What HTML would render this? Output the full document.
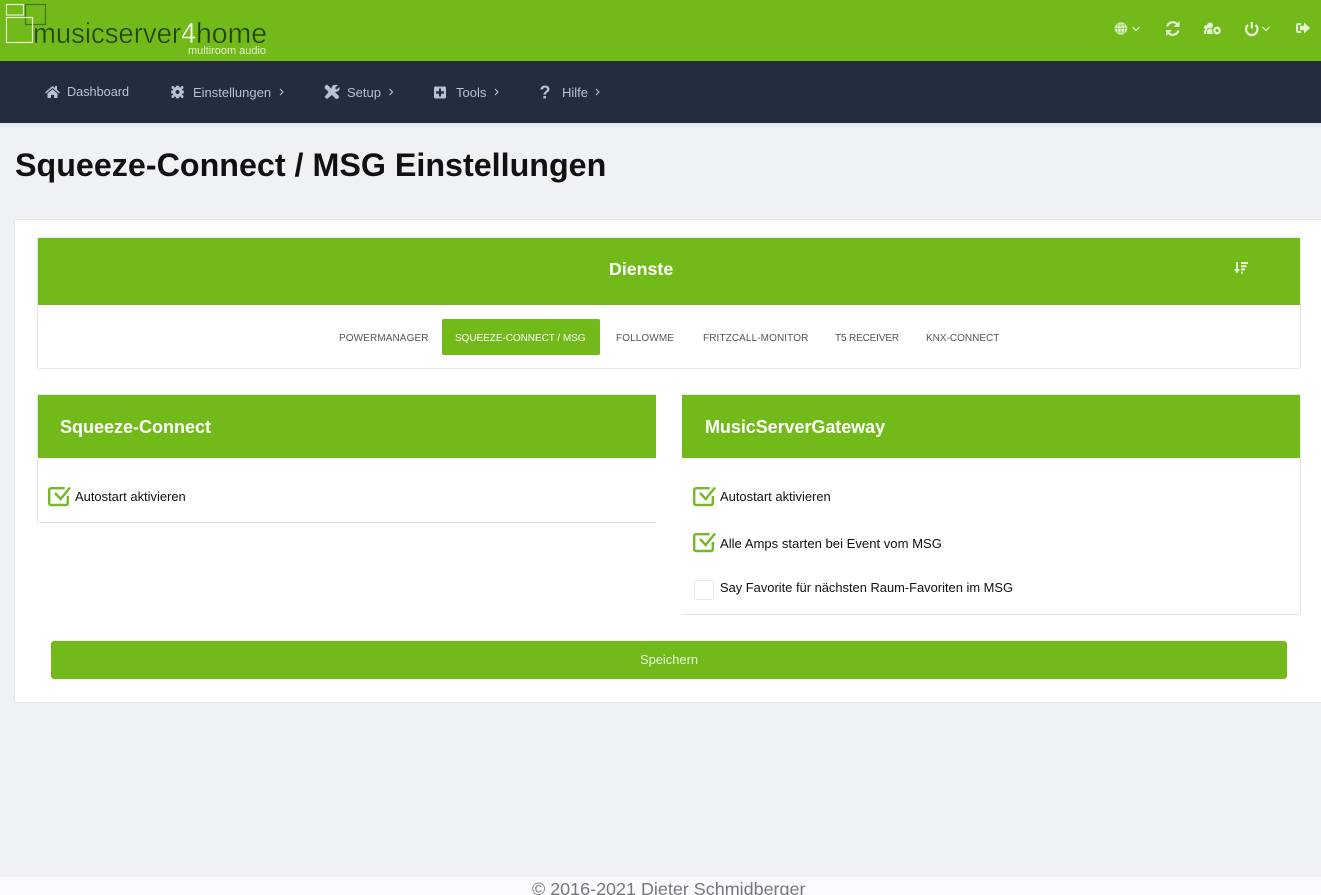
<!DOCTYPE html>
<html><head><meta charset="utf-8"><title>Squeeze-Connect / MSG Einstellungen</title>
<style>
*{box-sizing:border-box}
html,body{margin:0;padding:0;width:1321px;height:895px;overflow:hidden;background:#eef2f5;font-family:"Liberation Sans",Arial,sans-serif}
.a{position:absolute}
.t{position:absolute;white-space:nowrap;line-height:1}
svg{position:absolute;overflow:visible}
.nav{color:#b6c2d4;font-size:13px;top:85.5px}
.tab{color:#555;font-size:10px;top:333.5px}
.lab{color:#111;font-size:12.95px}
.cb{position:absolute;width:20px;height:20px;border:1px solid #e6e8ea;border-radius:2px;background:#fff}
#wrap{position:absolute;left:0;top:0;width:1321px;height:895px;overflow:hidden}
</style></head><body><div id="wrap">
<!-- top bar -->
<div class="a" style="left:0;top:0;width:1321px;height:61px;background:#72ba1a"></div>
<!-- logo -->
<svg style="left:0;top:0" width="300" height="61">
<rect x="6.500" y="4.500" width="17" height="10.500" fill="none" stroke="#e3f0cf" stroke-width="1.200"/>
<rect x="25.500" y="4.500" width="20" height="20" fill="none" stroke="#48701c" stroke-width="1.200"/>
<rect x="6.500" y="17.500" width="26" height="25" fill="none" stroke="#e3f0cf" stroke-width="1.200"/>
<g font-family="Liberation Sans" stroke="#72ba1a" stroke-width=".45">
<text x="33" y="43" font-size="29" fill="#24420f" textLength="148" lengthAdjust="spacingAndGlyphs">musicserver</text>
<text x="181" y="43" font-size="29" fill="#ffffff" textLength="15" lengthAdjust="spacingAndGlyphs">4</text>
<text x="196" y="43" font-size="29" fill="#24420f" textLength="71" lengthAdjust="spacingAndGlyphs">home</text>
</g>
<text x="188" y="54" font-family="Liberation Sans" font-size="11" fill="#e2f0cc" textLength="78" lengthAdjust="spacingAndGlyphs">multiroom audio</text>
</svg>
<!-- top icons -->
<svg style="left:1100px;top:10px" width="221" height="40" fill="none" stroke="#e4f1d2">
<circle cx="21" cy="18.500" r="6.200" fill="#e4f1d2" stroke="none"/>
<path d="M15 18.500h12M21 12.500v12M16.500 15h9M16.500 22h9" stroke="#8cc843" stroke-width=".7"/>
<path d="M18.500 13q-2.500 5.500 0 11M23.500 13q2.500 5.500 0 11" stroke="#8cc843" stroke-width=".7"/>
<path d="M32.500 17l3.500 3.500 3.500-3.500" stroke-width="1.200"/>
<path d="M67 16.500a6 6 0 0 1 10-2.500M78.500 20.500a6 6 0 0 1-10 2.500" stroke-width="2.200"/>
<path d="M79.500 11v6h-6zM66 26v-6h6z" fill="#e4f1d2" stroke="none"/>
<circle cx="110" cy="15.500" r="3" fill="#e4f1d2" stroke="none"/><circle cx="106" cy="17.300" r="2" fill="#e4f1d2" stroke="none"/>
<path d="M104 24v-2.500q0-2 2-2.300h1.500q-1.500 1.500-1.500 4.800zM107 24v-2q0-3 3-3h4v5z" fill="#e4f1d2" stroke="none"/>
<circle cx="117" cy="20.500" r="5" fill="#72ba1a" stroke="none"/>
<circle cx="117" cy="20.500" r="2.700" stroke-width="2.400" stroke="#e4f1d2" fill="#72ba1a"/>
<path d="M148 15a5.700 5.700 0 1 0 7.500 0" stroke-width="2.200"/><path d="M151.800 12v6.500" stroke-width="2.200"/>
<path d="M162.500 17l3.500 3.500 3.500-3.500" stroke-width="1.200"/>
<path d="M201 14h-2.500q-1.500 0-1.500 1.500v5q0 1.500 1.500 1.500h2.500" stroke-width="2"/>
<path d="M200 15.800h4v-3.300l6 5.500-6 5.500v-3.300h-4z" fill="#e4f1d2" stroke="none"/>
</svg>
<!-- nav -->
<div class="a" style="left:0;top:61px;width:1321px;height:62px;background:#232d3f"></div>
<div class="t nav" style="left:67px;font-size:12.700px;top:86px">Dashboard</div>
<div class="t nav" style="left:193px">Einstellungen</div>
<div class="t nav" style="left:347px">Setup</div>
<div class="t nav" style="left:456px">Tools</div>
<div class="t nav" style="left:562px">Hilfe</div>
<svg style="left:0;top:61px" width="620" height="62" fill="#b6c2d4" stroke="none">
<path d="M45 31.500l7.500-6.500 2.500 2V25h2v3.700l3 2.800-1 1-6.500-5.500L46 32.500z"/><path d="M47.500 32.500l5-4.200 5 4.200V37h-3.500v-3h-3v3h-3.500z"/>
<circle cx="177.500" cy="31" r="5.200"/><path d="M176 24.800h3v3h-3zM176 34.200h3v3h-3zM171.200 29.500h3v3h-3zM180.800 29.500h3v3h-3z"/><circle cx="173" cy="26.500" r="1.500"/><circle cx="182" cy="26.500" r="1.500"/><circle cx="173" cy="35.500" r="1.500"/><circle cx="182" cy="35.500" r="1.500"/><circle cx="177.500" cy="31" r="2" fill="#232d3f"/>
<path d="M325 25l2-1.500 12 11.500-.5 2.500-2.500.5L324.500 27z"/><path d="M338 24l-3 3 1.500 1.500 3-2.500q.5 3.500-2 4.500l-2 .5-8.500 7-2.500-2 7-8.500q0-4.500 6.500-3.500z"/>
<path d="M435.500 25.500h9q1.500 0 1.500 1.500v9q0 1.500-1.500 1.500h-9q-1.500 0-1.500-1.500v-9q0-1.500 1.500-1.500zM439 27.500v2.800h-2.800v2.400H439v2.800h2v-2.800h2.800v-2.400H441v-2.800z" fill-rule="evenodd"/>
<text x="539.500" y="37.500" font-family="Liberation Sans" font-weight="700" font-size="18">?</text>
<g fill="none" stroke="#b6c2d4" stroke-width="1.100"><path d="M280 28l3 3-3 3M389.500 28l3 3-3 3M495 28l3 3-3 3M596 28l3 3-3 3"/></g>
</svg>
<!-- heading -->
<div class="a" style="left:0;top:123px;width:1321px;height:6px;background:linear-gradient(#e4e8ec,#eef2f5)"></div>
<div class="t" style="left:15px;top:149px;font-size:32.250px;font-weight:700;color:#111">Squeeze-Connect / MSG Einstellungen</div>
<!-- main card -->
<div class="a" style="left:14px;top:219px;width:1320px;height:484px;background:#fff;border:1px solid #e2e6ea;border-radius:3px"></div>
<!-- Dienste -->
<div class="a" style="left:37px;top:237px;width:1264px;height:132px;background:#fff;border:1px solid #e4e7ea;border-radius:3px"></div>
<div class="a" style="left:38px;top:238px;width:1262px;height:67px;background:#72ba1a"></div>
<div class="t" style="left:609px;top:261px;font-size:17.800px;font-weight:700;color:#fff">Dienste</div>
<svg style="left:1234px;top:262px" width="14" height="12" fill="#eaf4dc">
<path d="M2 0h2v7h2l-3 4.500L0 7h2z"/><path d="M7 0h7v2H7zM7 3.200h5.500v2H7zM7 6.400h4v2H7zM7 9.600h2v2H7z"/>
</svg>
<div class="t tab" style="left:339px;letter-spacing:.1px">POWERMANAGER</div>
<div class="a" style="left:442px;top:319px;width:158px;height:36px;background:#72ba1a;border-radius:2px"></div>
<div class="t tab" style="left:455px;color:#fff;letter-spacing:-.05px">SQUEEZE-CONNECT / MSG</div>
<div class="t tab" style="left:616px;letter-spacing:.1px">FOLLOWME</div>
<div class="t tab" style="left:703px;letter-spacing:.1px">FRITZCALL-MONITOR</div>
<div class="t tab" style="left:835px;letter-spacing:-.15px">T5 RECEIVER</div>
<div class="t tab" style="left:926px">KNX-CONNECT</div>
<!-- left panel -->
<div class="a" style="left:37px;top:394px;width:619px;height:129px;background:#fff;border-left:1px solid #e4e7ea;border-bottom:1px solid #e0e3e6;border-top:1px solid #e4e7ea;border-radius:3px 0 0 0"></div>
<div class="a" style="left:38px;top:395px;width:618px;height:63px;background:#72ba1a"></div>
<div class="t" style="left:60px;top:417.500px;font-size:18px;font-weight:700;color:#fff">Squeeze-Connect</div>
<svg style="left:48px;top:485px" width="24" height="22" fill="none" stroke="#76b82a">
<path d="M19.800 11v7q0 2-2 2H3.200q-2 0-2-2V5.200q0-2 2-2h13.500" stroke-width="2.400"/>
<path d="M7 8l5.700 6L22 2.500" stroke-width="2.400"/>
</svg>
<div class="t lab" style="left:75px;top:490.500px">Autostart aktivieren</div>
<!-- right panel -->
<div class="a" style="left:682px;top:394px;width:619px;height:221px;background:#fff;border-right:1px solid #e4e7ea;border-bottom:1px solid #e0e3e6;border-top:1px solid #e4e7ea;border-radius:0 3px 3px 0"></div>
<div class="a" style="left:682px;top:395px;width:618px;height:63px;background:#72ba1a"></div>
<div class="t" style="left:705px;top:417.500px;font-size:18px;font-weight:700;color:#fff;letter-spacing:-.06px">MusicServerGateway</div>
<svg style="left:693px;top:485px" width="24" height="22" fill="none" stroke="#76b82a">
<path d="M19.800 11v7q0 2-2 2H3.200q-2 0-2-2V5.200q0-2 2-2h13.500" stroke-width="2.400"/>
<path d="M7 8l5.700 6L22 2.500" stroke-width="2.400"/>
</svg>
<div class="t lab" style="left:720px;top:490.500px">Autostart aktivieren</div>
<svg style="left:693px;top:531px" width="24" height="22" fill="none" stroke="#76b82a">
<path d="M19.800 11v7q0 2-2 2H3.200q-2 0-2-2V5.200q0-2 2-2h13.500" stroke-width="2.400"/>
<path d="M7 8l5.700 6L22 2.500" stroke-width="2.400"/>
</svg>
<div class="t lab" style="left:720px;top:536.500px;font-size:13.100px">Alle Amps starten bei Event vom MSG</div>
<div class="cb" style="left:694px;top:580px"></div>
<div class="t lab" style="left:720px;top:581.500px;font-size:12.900px">Say Favorite für nächsten Raum-Favoriten im MSG</div>
<!-- button -->
<div class="a" style="left:51px;top:641px;width:1236px;height:38px;background:#72ba1a;border-radius:3px"></div>
<div class="t" style="left:640px;top:653.500px;font-size:12.900px;color:#eaf4dc">Speichern</div>
<!-- footer -->
<div class="a" style="left:0;top:877px;width:1321px;height:18px;background:#f8faff"></div>
<div class="t" style="left:532px;top:880.500px;font-size:17.950px;color:#777">© 2016-2021 Dieter Schmidberger</div>
</div></body></html>
